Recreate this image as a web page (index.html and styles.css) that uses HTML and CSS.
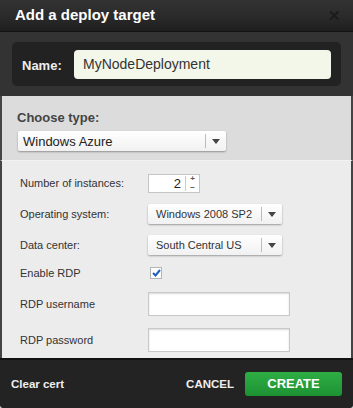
FILE: index.html
```html
<!DOCTYPE html>
<html lang="en">
<head>
    <meta charset="UTF-8">
    <title>Add a deploy target</title>
    <link rel="stylesheet" href="styles.css">
</head>
<body>
    <div id="dialog">
        <div class="head">
            <h1>Add a deploy target</h1>
            <span class="close">&#x2715;</span>
        </div>
        <div class="name-wrap">
            <div class="name-box">
                <label>Name:</label>
                <div class="name-input">MyNodeDeployment</div>
            </div>
        </div>
        <div class="type">
            <h3>Choose type:</h3>
            <div class="select big">
                <span>Windows Azure</span>
                <i class="arrow"></i>
            </div>
        </div>
        <div class="fields">
            <div class="row">
                <label>Number of instances:</label>
                <div class="spin">
                    <span class="val">2</span>
                    <span class="pm"><b>+</b><b>&minus;</b></span>
                </div>
            </div>
            <div class="row">
                <label>Operating system:</label>
                <div class="select">
                    <span>Windows 2008 SP2</span>
                    <i class="arrow"></i>
                </div>
            </div>
            <div class="row">
                <label>Data center:</label>
                <div class="select">
                    <span>South Central US</span>
                    <i class="arrow"></i>
                </div>
            </div>
            <div class="row short">
                <label>Enable RDP</label>
                <div class="check">
                    <svg width="9" height="8" viewBox="0 0 9 8"><path d="M1 4 L3.5 6.5 L8 1" fill="none" stroke="#1f5fc4" stroke-width="2"/></svg>
                </div>
            </div>
            <div class="row tall">
                <label>RDP username</label>
                <div class="text"></div>
            </div>
            <div class="row tall">
                <label>RDP password</label>
                <div class="text"></div>
            </div>
        </div>
        <div class="foot">
            <a class="clear">Clear cert</a>
            <a class="cancel">CANCEL</a>
            <button class="create">CREATE</button>
        </div>
    </div>
</body>
</html>
```

FILE: styles.css
```css
* {
    margin: 0;
    padding: 0;
    box-sizing: border-box;
}
html, body {
    width: 353px;
    height: 408px;
    background: #c8c8c8;
    font-family: "Liberation Sans", Arial, sans-serif;
    overflow: hidden;
}
#dialog {
    width: 353px;
    height: 408px;
    background: #2b2b2b;
    border-radius: 0 0 4px 4px;
    display: flex;
    flex-direction: column;
}
.head {
    height: 33px;
    background: linear-gradient(#333 0%, #2a2a2a 55%, #1e1e1e 100%);
    border-bottom: 1px solid #111;
    display: flex;
    align-items: center;
    justify-content: space-between;
    padding: 0 12px 0 15px;
}
.head h1 {
    color: #fff;
    font-size: 15px;
    font-weight: bold;
    margin-top: -2px;
}
.close {
    color: #1b1b1b;
    font-size: 15px;
    font-weight: bold;
}
.name-wrap {
    background: #333;
    padding: 10px 12px 10px 12px;
    height: 64px;
}
.name-box {
    background: #222;
    border-radius: 5px;
    height: 44px;
    display: flex;
    align-items: center;
    padding: 0 10px 0 10px;
}
.name-box label {
    color: #eee;
    font-weight: bold;
    font-size: 13px;
    width: 52px;
    margin-top: 3px;
}
.name-input {
    flex: 1;
    height: 29px;
    background: #f3f7ea;
    border-radius: 4px;
    color: #333;
    font-size: 14px;
    line-height: 29px;
    padding-left: 9px;
}
.type {
    background: #dcdcdc;
    border-left: 2px solid #444;
    border-right: 2px solid #444;
    height: 66px;
    padding: 14px 0 0 15px;
    border-bottom: 1px solid #f2f2f2;
}
.type h3 {
    color: #444;
    font-size: 13px;
    font-weight: bold;
    margin-bottom: 6px;
}
.select {
    width: 134px;
    height: 20px;
    background: linear-gradient(#fff, #f1f1f1);
    border-radius: 2px;
    box-shadow: 0 1px 2px rgba(0, 0, 0, 0.35);
    display: flex;
    align-items: center;
    font-size: 11px;
    color: #333;
    padding-left: 8px;
}
.select span {
    flex: 1;
}
.select.big {
    width: 208px;
    margin-left: 1px;
    font-size: 13px;
    color: #222;
    padding-left: 5px;
}
.arrow {
    width: 21px;
    height: 14px;
    border-left: 1px solid #bbb;
    position: relative;
}
.arrow::after {
    content: "";
    position: absolute;
    left: 6px;
    top: 5px;
    border-left: 4px solid transparent;
    border-right: 4px solid transparent;
    border-top: 5px solid #444;
}
.fields {
    flex: 1;
    background: #ececec;
    border-left: 2px solid #444;
    border-right: 2px solid #444;
    padding: 7px 0 0 18px;
}
.row {
    display: flex;
    align-items: center;
    height: 31px;
}
.row label {
    width: 128px;
    font-size: 11px;
    color: #333;
}
.row.short {
    height: 25px;
}
.row.tall {
    height: 36px;
}
.spin {
    width: 52px;
    height: 19px;
    background: #fff;
    border: 1px solid #c5c5c5;
    display: flex;
    align-items: center;
    font-size: 13px;
    color: #222;
}
.spin .val {
    flex: 1;
    text-align: right;
    padding-right: 4px;
    border-right: 1px solid #ccc;
    line-height: 15px;
}
.pm {
    width: 13px;
    height: 17px;
    display: flex;
    flex-direction: column;
    justify-content: space-between;
    align-items: center;
    font-size: 8px;
    line-height: 8px;
    color: #555;
}
.check {
    width: 12px;
    height: 12px;
    margin-left: 2px;
    background: #fff;
    border: 1px solid #b5b5b5;
    display: flex;
    align-items: center;
    justify-content: center;
}
.text {
    width: 142px;
    height: 24px;
    background: #fff;
    border: 1px solid #c8c8c8;
    box-shadow: inset 0 1px 2px rgba(0, 0, 0, 0.15);
}
.foot {
    height: 52px;
    background: #232323;
    border-top: 2px solid #111;
    display: flex;
    align-items: center;
    padding: 0 11px 0 11px;
    border-radius: 0 0 4px 4px;
}
.foot a {
    color: #eee;
    font-weight: bold;
    font-size: 11.5px;
}
.clear {
    flex: 1;
}
.cancel {
    margin-right: 11px;
}
.create {
    width: 97px;
    height: 24px;
    border: none;
    border-radius: 3px;
    background: linear-gradient(#2fae45, #1c9232);
    color: #fff;
    font-family: "Liberation Sans", Arial, sans-serif;
    font-weight: bold;
    font-size: 13px;
}
```
